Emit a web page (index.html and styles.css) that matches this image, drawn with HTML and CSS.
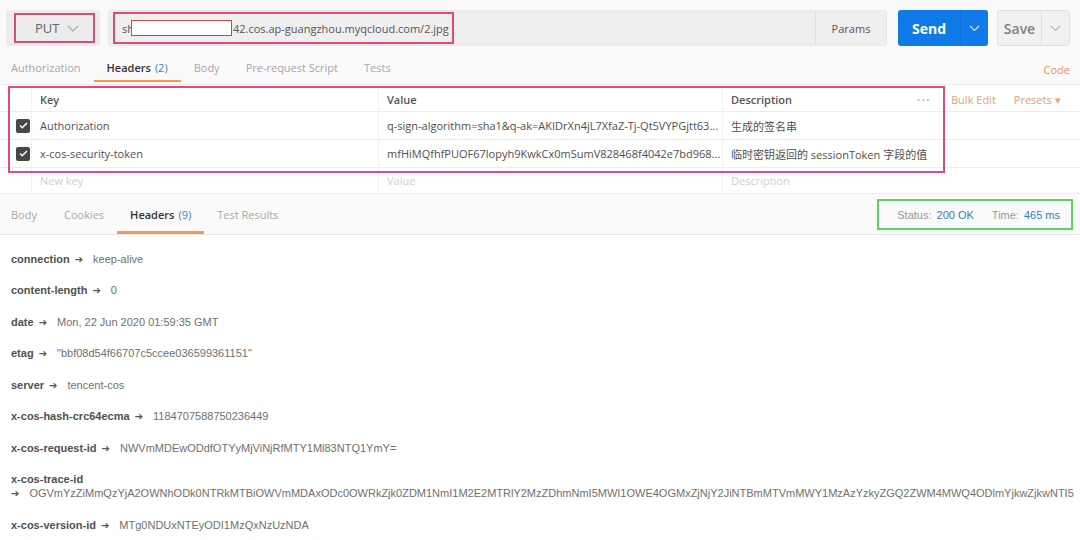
FILE: index.html
```html
<!DOCTYPE html>
<html lang="zh-CN">
<head>
  <meta charset="UTF-8" />
  <meta name="viewport" content="width=device-width, initial-scale=1.0">
  <title>PUT 2.jpg</title>
  <link rel="stylesheet" href="styles.css">
</head>
<body>

  <div class="app">

    <!-- Barra de requisição -->
    <div class="request-bar">
      <div class="method">
        <div class="method-box">
          <span>PUT</span>
          <svg class="chev" width="12" height="7" viewBox="0 0 12 7"><path d="M1 1l5 5 5-5" fill="none" stroke="#aaa" stroke-width="1.2"/></svg>
        </div>
      </div>
      <div class="url">
        <div class="url-box"><span>sh</span><span class="redact"></span><span>42.cos.ap-guangzhou.myqcloud.com/2.jpg</span></div>
        <div class="params">Params</div>
      </div>
      <div class="send">
        <span class="send-label">Send</span>
        <span class="send-caret">
          <svg width="11" height="7" viewBox="0 0 11 7"><path d="M1 1l4.5 4.5L10 1" fill="none" stroke="#cfe4fb" stroke-width="1.2"/></svg>
        </span>
      </div>
      <div class="save">
        <span class="save-label">Save</span>
        <span class="save-caret">
          <svg width="11" height="7" viewBox="0 0 11 7"><path d="M1 1l4.5 4.5L10 1" fill="none" stroke="#bbb" stroke-width="1.2"/></svg>
        </span>
      </div>
    </div>

    <div class="req-tabs">
      <div class="tab first">Authorization</div>
      <div class="tab active">Headers<span class="count">(2)</span></div>
      <div class="tab">Body</div>
      <div class="tab">Pre-request Script</div>
      <div class="tab">Tests</div>
      <div class="code-link">Code</div>
    </div>

    <!-- Tabela de headers -->
    <div class="headers-table">
      <div class="row head">
        <div class="cell check"></div>
        <div class="cell">Key</div>
        <div class="cell">Value</div>
        <div class="cell desc">Description <span class="dots">&middot;&middot;&middot;</span></div>
        <div class="cell extra"><span class="bulk">Bulk Edit</span><span class="presets">Presets &#9662;</span></div>
      </div>
      <div class="row">
        <div class="cell check"><span class="box"><svg width="9" height="7" viewBox="0 0 9 7"><path d="M1 3.5l2.3 2.3L8 1" fill="none" stroke="#fff" stroke-width="1.5"/></svg></span></div>
        <div class="cell">Authorization</div>
        <div class="cell">q-sign-algorithm=sha1&amp;q-ak=AKIDrXn4jL7XfaZ-Tj-Qt5VYPGjtt63...</div>
        <div class="cell desc">生成的签名串</div>
        <div class="cell extra"></div>
      </div>
      <div class="row">
        <div class="cell check"><span class="box"><svg width="9" height="7" viewBox="0 0 9 7"><path d="M1 3.5l2.3 2.3L8 1" fill="none" stroke="#fff" stroke-width="1.5"/></svg></span></div>
        <div class="cell">x-cos-security-token</div>
        <div class="cell">mfHiMQfhfPUOF67lopyh9KwkCx0mSumV828468f4042e7bd968...</div>
        <div class="cell desc">临时密钥返回的 sessionToken 字段的值</div>
        <div class="cell extra"></div>
      </div>
      <div class="row placeholder">
        <div class="cell check"></div>
        <div class="cell">New key</div>
        <div class="cell">Value</div>
        <div class="cell desc">Description</div>
        <div class="cell extra"></div>
      </div>
    </div>

    <!-- Resposta -->
    <div class="res-tabs">
      <div class="tab first">Body</div>
      <div class="tab">Cookies</div>
      <div class="tab active">Headers<span class="count">(9)</span></div>
      <div class="tab">Test Results</div>
      <div class="status">
        <span class="lbl">Status:</span><span class="val">200 OK</span>
        <span class="lbl time">Time:</span><span class="val">465 ms</span>
      </div>
    </div>

    <ul class="res-headers">
      <li><b>connection</b><i>&#10132;</i>keep-alive</li>
      <li><b>content-length</b><i>&#10132;</i>0</li>
      <li><b>date</b><i>&#10132;</i>Mon, 22 Jun 2020 01:59:35 GMT</li>
      <li><b>etag</b><i>&#10132;</i>"bbf08d54f66707c5ccee036599361151"</li>
      <li><b>server</b><i>&#10132;</i>tencent-cos</li>
      <li><b>x-cos-hash-crc64ecma</b><i>&#10132;</i>1184707588750236449</li>
      <li><b>x-cos-request-id</b><i>&#10132;</i>NWVmMDEwODdfOTYyMjViNjRfMTY1Ml83NTQ1YmY=</li>
      <li class="wrap"><b>x-cos-trace-id</b><br><i class="lead">&#10132;</i>OGVmYzZiMmQzYjA2OWNhODk0NTRkMTBiOWVmMDAxODc0OWRkZjk0ZDM1NmI1M2E2MTRlY2MzZDhmNmI5MWI1OWE4OGMxZjNjY2JiNTBmMTVmMWY1MzAzYzkyZGQ2ZWM4MWQ4ODlmYjkwZjkwNTI5</li>
      <li><b>x-cos-version-id</b><i>&#10132;</i>MTg0NDUxNTEyODI1MzQxNzUzNDA</li>
    </ul>

    <!-- Marcações por cima da captura -->
    <div class="mark mark-table"></div>
    <div class="mark mark-status"></div>
  </div>

</body>
</html>
```

FILE: styles.css
```css
* {
  margin: 0;
  padding: 0;
  box-sizing: border-box;
}

body {
  background: #fff;
  font-family: "Open Sans", "Noto Sans CJK SC", sans-serif;
  font-size: 11px;
  color: #505050;
}

.app {
  position: relative;
  width: 1080px;
  height: 540px;
  overflow: hidden;
}

/* Barra de requisição */
.request-bar {
  display: flex;
  align-items: center;
  height: 52px;
  padding: 10px 0 6px 6px;
  background: #fafafa;
}

.method {
  width: 94px;
  height: 36px;
  background: #ececec;
  border-radius: 3px;
  display: flex;
  align-items: center;
  padding-left: 8px;
}

.method-box {
  width: 81px;
  height: 30px;
  border: 2px solid #e2487d;
  display: flex;
  align-items: center;
  padding-left: 19px;
  gap: 8px;
  font-size: 13px;
  color: #666;
}

.url {
  margin-left: 8px;
  width: 779px;
  height: 36px;
  background: #efefef;
  border: 1px solid #e6e6e6;
  border-radius: 3px;
  display: flex;
  align-items: center;
}

.url-box {
  margin-left: 4px;
  width: 341px;
  height: 32px;
  border: 2px solid #e2487d;
  display: flex;
  align-items: center;
  padding-left: 7px;
  font-size: 11px;
  color: #555;
  white-space: nowrap;
}

.redact {
  flex-shrink: 0;
  width: 101px;
  height: 16px;
  background: #fff;
  border: 1.5px solid #d8433c;
  margin: 0 1px 0 -3px;
}

.params {
  margin-left: auto;
  width: 71px;
  height: 100%;
  border-left: 1px solid #dedede;
  display: flex;
  align-items: center;
  justify-content: center;
  color: #555;
}

.send {
  margin-left: 11px;
  width: 90px;
  height: 36px;
  background: #0f7ae8;
  border-radius: 3px;
  display: flex;
  align-items: center;
}

.send-label {
  flex: 1;
  text-align: center;
  color: #fff;
  font-size: 14px;
  font-weight: 700;
}

.send-caret {
  width: 28px;
  height: 100%;
  border-left: 1px solid #1470d0;
  display: flex;
  align-items: center;
  justify-content: center;
}

.save {
  margin-left: 9px;
  width: 73px;
  height: 36px;
  background: #f1f1f1;
  border: 1px solid #e2e2e2;
  border-radius: 3px;
  display: flex;
  align-items: center;
}

.save-label {
  flex: 1;
  text-align: center;
  color: #808080;
  font-size: 14px;
  font-weight: 600;
}

.save-caret {
  width: 28px;
  height: 100%;
  border-left: 1px solid #e0e0e0;
  display: flex;
  align-items: center;
  justify-content: center;
}

/* Abas */
.req-tabs,
.res-tabs {
  display: flex;
  align-items: stretch;
}

.req-tabs {
  height: 33px;
  background: #fafafa;
  border-bottom: 1px solid #ececec;
  padding-bottom: 2px;
}

.tab {
  display: flex;
  align-items: center;
  padding: 3px 13px 0;
  color: #a8a8a8;
  border-bottom: 2px solid transparent;
  white-space: nowrap;
}

.tab.first {
  padding-left: 11px;
}

.tab.active {
  color: #333;
  font-weight: 600;
  border-bottom-color: #f09a56;
}

.tab .count {
  margin-left: 4px;
  color: #3a83d0;
  font-weight: 400;
}

.code-link {
  margin-left: auto;
  padding: 10px 10px 0 0;
  color: #e8954f;
}

/* Tabela */
.headers-table {
  margin-top: 2px;
}

.row {
  display: grid;
  grid-template-columns: 31px 347px 344px 223px 1fr;
  height: 28px;
  border-bottom: 1px solid #ececec;
}

.row.head {
  height: 25px;
  font-weight: 600;
  color: #555;
}

.cell {
  display: flex;
  align-items: center;
  padding-left: 8px;
  border-left: 1px solid #f2f2f2;
  white-space: nowrap;
  overflow: hidden;
}

.cell.check {
  border-left: none;
  padding-left: 16px;
}

.cell.extra {
  border-left: none;
  padding-left: 6px;
}

.dots {
  margin-left: auto;
  margin-right: 14px;
  color: #aaa;
  font-weight: 700;
  letter-spacing: 1.5px;
}

.bulk,
.presets {
  color: #e7a174;
  font-weight: 400;
}

.presets {
  margin-left: 18px;
}

.box {
  width: 14px;
  height: 14px;
  border-radius: 2px;
  background: #474747;
  display: flex;
  align-items: center;
  justify-content: center;
}

.row.placeholder {
  color: #d0d0d0;
  height: 26px;
}

/* Resposta */
.res-tabs {
  height: 41px;
  background: #fafafa;
  border-bottom: 1px solid #e6e6e6;
}

.res-tabs .tab {
  padding: 4px 13px 0;
  border-bottom-width: 3px;
}

.res-tabs .tab.first {
  padding-left: 11px;
  padding-right: 14px;
}

.status {
  margin-left: auto;
  margin-right: 20px;
  display: flex;
  align-items: center;
  padding-top: 2px;
  font-family: "Liberation Sans", Arial, sans-serif;
  font-size: 11px;
}

.status .lbl {
  color: #999;
  margin-right: 5px;
}

.status .lbl.time {
  margin-left: 18px;
}

.status .val {
  color: #3a7cc4;
}

.res-headers {
  list-style: none;
  padding: 8px 0 0 11px;
  font-family: "Liberation Sans", Arial, sans-serif;
  font-size: 11px;
  color: #707070;
}

.res-headers li {
  height: 31.5px;
  line-height: 14px;
  padding: 8.75px 0;
  white-space: nowrap;
}

.res-headers li.wrap {
  height: 45.5px;
}

.res-headers b {
  color: #505050;
}

.res-headers i {
  font-style: normal;
  font-family: "DejaVu Sans", sans-serif;
  font-size: 10px;
  line-height: 10px;
  color: #555;
  margin: 0 10px 0 5px;
}

.res-headers i.lead {
  margin-left: 0;
}

/* Marcações */
.mark {
  position: absolute;
  pointer-events: none;
}

.mark-table {
  left: 8px;
  top: 86px;
  width: 937px;
  height: 87px;
  border: 2px solid #e2487d;
}

.mark-status {
  left: 877px;
  top: 199px;
  width: 196px;
  height: 31px;
  border: 2px solid #5fd35f;
}
```
